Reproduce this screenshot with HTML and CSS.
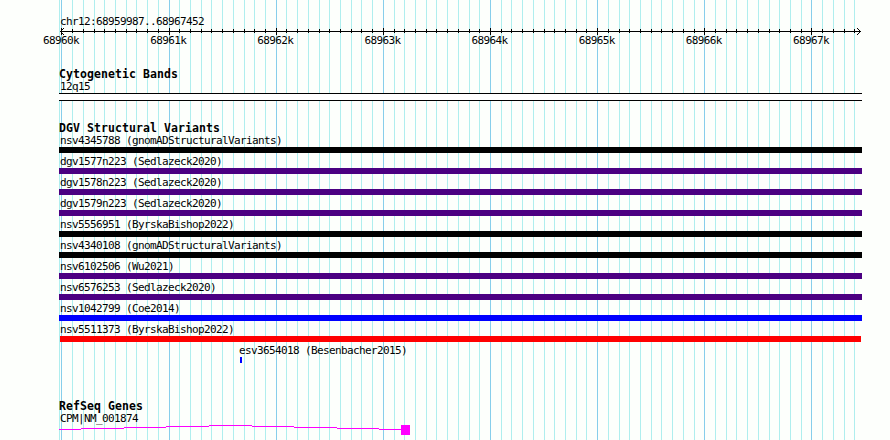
FILE: index.html
```
<!DOCTYPE html>
<html lang="en">
<head>
    <meta charset="UTF-8">
    <title>chr12:68959987..68967452</title>
    <link rel="stylesheet" href="styles.css">
</head>
<body>
    <div id="panel">
        <svg id="grid" width="890" height="440"></svg>

        <div class="track ruler">
            <div class="label">chr12:68959987..68967452</div>
            <svg id="scale" width="890" height="9"></svg>
            <div class="ticks">
                <span>68960k</span>
                <span>68961k</span>
                <span>68962k</span>
                <span>68963k</span>
                <span>68964k</span>
                <span>68965k</span>
                <span>68966k</span>
                <span>68967k</span>
            </div>
        </div>

        <div class="track cyto">
            <h2>Cytogenetic Bands</h2>
            <div class="label">12q15</div>
            <div class="band"></div>
        </div>

        <div class="track dgv">
            <h2>DGV Structural Variants</h2>
            <div class="feature"><div class="label">nsv4345788 (gnomADStructuralVariants)</div><div class="bar black"></div></div>
            <div class="feature"><div class="label">dgv1577n223 (Sedlazeck2020)</div><div class="bar purple"></div></div>
            <div class="feature"><div class="label">dgv1578n223 (Sedlazeck2020)</div><div class="bar purple"></div></div>
            <div class="feature"><div class="label">dgv1579n223 (Sedlazeck2020)</div><div class="bar purple"></div></div>
            <div class="feature"><div class="label">nsv5556951 (ByrskaBishop2022)</div><div class="bar black"></div></div>
            <div class="feature"><div class="label">nsv4340108 (gnomADStructuralVariants)</div><div class="bar black"></div></div>
            <div class="feature"><div class="label">nsv6102506 (Wu2021)</div><div class="bar purple"></div></div>
            <div class="feature"><div class="label">nsv6576253 (Sedlazeck2020)</div><div class="bar purple"></div></div>
            <div class="feature"><div class="label">nsv1042799 (Coe2014)</div><div class="bar blue"></div></div>
            <div class="feature"><div class="label">nsv5511373 (ByrskaBishop2022)</div><div class="bar red"></div></div>
            <div class="feature small"><div class="label">esv3654018 (Besenbacher2015)</div><div class="bar blue"></div></div>
        </div>

        <div class="track genes">
            <h2>RefSeq Genes</h2>
            <div class="label">CPM|NM_001874</div>
            <svg class="gene" width="803" height="11" shape-rendering="crispEdges">
                <path fill="#f0f" d="M0 4h22v1h-22zM22 3h43v1h-43zM65 2h42v1h-42zM107 1h43v1h-43zM150 0h43v1h-43zM193 1h42v1h-42zM235 2h43v1h-43zM278 3h42v1h-42zM320 4h22v1h-22z"/>
                <rect x="342" y="0" width="9" height="10" fill="#f0f"/>
            </svg>
        </div>
    </div>
    <script src="grid.js"></script>
</body>
</html>
```
FILE: styles.css
```
*{
    margin: 0px;
    padding: 0px;
    box-sizing: border-box;
}
body{
    background-color: #fdfffc;
    overflow: hidden;
}
#panel{
    width: 890px;
    height: 440px;
    position: relative;
    overflow: hidden;
    color: #000;
    font-family: "DejaVu Sans Mono", monospace;
}
#grid{
    position: absolute;
    top: 0px;
    left: 0px;
    z-index: -1;
}
svg{
    display: block;
}
.track{
    padding-left: 59px;
}
.label{
    height: 12px;
    padding-left: 1px;
    font-size: 11px;
    line-height: 14px;
    letter-spacing: -0.622px;
    white-space: pre;
}
h2{
    height: 13px;
    font-size: 11.5px;
    line-height: 13px;
    letter-spacing: 0.077px;
    white-space: pre;
}
.ruler{
    height: 68px;
    padding-top: 15px;
}
#scale{
    margin-left: -59px;
}
.ticks{
    width: 786px;
    margin-left: -16px;
    margin-top: -1px;
    display: flex;
    justify-content: space-between;
    font-size: 11px;
    line-height: 12px;
    letter-spacing: -0.622px;
}
.cyto{
    height: 54px;
}
.cyto .label{
    margin-top: -1px;
}
.band{
    width: 803px;
    height: 8px;
    margin-top: 1px;
    border-top: 1px solid #000;
    border-bottom: 1px solid #000;
    background-color: #fff;
}
.dgv{
    height: 278px;
}
.dgv h2{
    height: 12px;
}
.feature{
    height: 21px;
}
.bar{
    width: 803px;
    height: 6px;
    margin-top: 1px;
}
.black{
    background-color: #000;
}
.purple{
    background-color: #4b0082;
}
.blue{
    background-color: #00f;
}
.red{
    width: 801px;
    margin-left: 1px;
    background-color: #f00;
}
.small{
    margin-left: 180px;
}
.small .label{
    padding-left: 0px;
}
.small .bar{
    width: 2px;
    margin-left: 1px;
}
.genes h2{
    height: 12px;
}
.gene{
    margin-top: 1px;
}
```
FILE: grid.js
```
var grid = document.getElementById('grid');
var scale = document.getElementById('scale');

function rect(svg, x, y, w, h, color) {
    var r = document.createElementNS('http://www.w3.org/2000/svg', 'rect');
    r.setAttribute('x', x);
    r.setAttribute('y', y);
    r.setAttribute('width', w);
    r.setAttribute('height', h);
    r.setAttribute('fill', color);
    svg.appendChild(r);
}

rect(grid, 59, 0, 1, 440, '#afeeee');
rect(scale, 60, 4, 801, 1, '#000');

// one line per 100 bp, darker every 1000 bp
for (var i = 0; i < 75; i++) {
    var x = Math.round(61.4 + i * 10.7145);
    var major = i % 10 == 0;
    rect(grid, x, 0, 1, 440, major ? '#87ceeb' : '#afeeee');
    if (major) {
        rect(scale, x, 1, 1, 7, '#000');
    }
    else {
        rect(scale, x, 2, 1, 4, '#000');
    }
}

// arrow heads
for (var j = 1; j < 4; j++) {
    rect(scale, 60 + j, 4 - j, 1, 1, '#000');
    rect(scale, 60 + j, 4 + j, 1, 1, '#000');
    rect(scale, 860 - j, 4 - j, 1, 1, '#000');
    rect(scale, 860 - j, 4 + j, 1, 1, '#000');
}
```
